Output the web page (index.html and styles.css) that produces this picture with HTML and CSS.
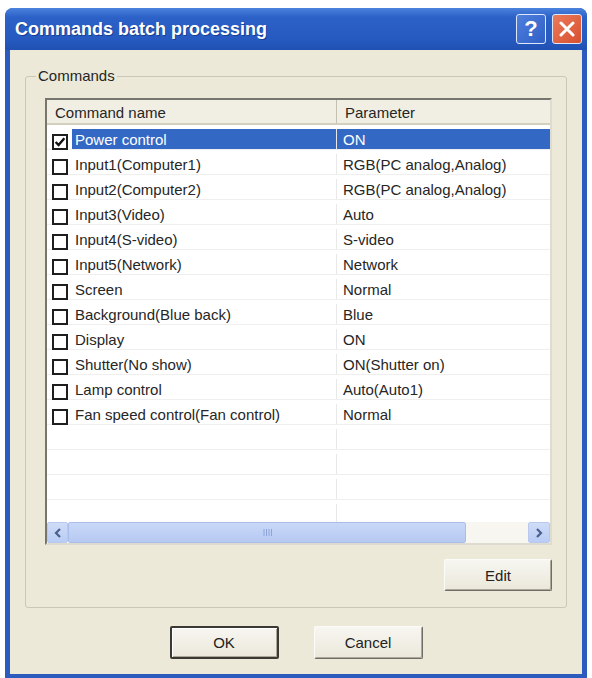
FILE: index.html
```html
<!DOCTYPE html>
<html lang="en">
<head>
    <meta charset="UTF-8">
    <title>Commands batch processing</title>
    <link rel="stylesheet" href="styles.css">
</head>
<body>
    <div class="window">
        <div class="titlebar">
            <span class="title">Commands batch processing</span>
            <span class="tb-btn tb-help">?</span>
            <span class="tb-btn tb-close">
                <svg width="16" height="16" viewBox="0 0 16 16"><path d="M2 2 L14 14 M14 2 L2 14" stroke="#fff" stroke-width="3" stroke-linecap="round"/></svg>
            </span>
        </div>
        <div class="client">
            <div class="group">
                <span class="group-label">Commands</span>
                <div class="list">
                    <div class="list-head">
                        <div class="head-cell head-name">Command name</div>
                        <div class="head-cell">Parameter</div>
                    </div>
                    <div class="rows">
                        <div class="row selected">
                            <div class="cell-name"><span class="check checked"><svg width="12" height="12" viewBox="0 0 11 11"><path d="M1.5 5.5 L4.2 8.3 L9.5 2" fill="none" stroke="#111" stroke-width="2.2"/></svg></span><span class="label">Power control</span></div>
                            <div class="cell-param">ON</div>
                        </div>
                        <div class="row">
                            <div class="cell-name"><span class="check"></span><span class="label">Input1(Computer1)</span></div>
                            <div class="cell-param">RGB(PC analog,Analog)</div>
                        </div>
                        <div class="row">
                            <div class="cell-name"><span class="check"></span><span class="label">Input2(Computer2)</span></div>
                            <div class="cell-param">RGB(PC analog,Analog)</div>
                        </div>
                        <div class="row">
                            <div class="cell-name"><span class="check"></span><span class="label">Input3(Video)</span></div>
                            <div class="cell-param">Auto</div>
                        </div>
                        <div class="row">
                            <div class="cell-name"><span class="check"></span><span class="label">Input4(S-video)</span></div>
                            <div class="cell-param">S-video</div>
                        </div>
                        <div class="row">
                            <div class="cell-name"><span class="check"></span><span class="label">Input5(Network)</span></div>
                            <div class="cell-param">Network</div>
                        </div>
                        <div class="row">
                            <div class="cell-name"><span class="check"></span><span class="label">Screen</span></div>
                            <div class="cell-param">Normal</div>
                        </div>
                        <div class="row">
                            <div class="cell-name"><span class="check"></span><span class="label">Background(Blue back)</span></div>
                            <div class="cell-param">Blue</div>
                        </div>
                        <div class="row">
                            <div class="cell-name"><span class="check"></span><span class="label">Display</span></div>
                            <div class="cell-param">ON</div>
                        </div>
                        <div class="row">
                            <div class="cell-name"><span class="check"></span><span class="label">Shutter(No show)</span></div>
                            <div class="cell-param">ON(Shutter on)</div>
                        </div>
                        <div class="row">
                            <div class="cell-name"><span class="check"></span><span class="label">Lamp control</span></div>
                            <div class="cell-param">Auto(Auto1)</div>
                        </div>
                        <div class="row">
                            <div class="cell-name"><span class="check"></span><span class="label">Fan speed control(Fan control)</span></div>
                            <div class="cell-param">Normal</div>
                        </div>
                        <div class="row empty"><div class="cell-name"></div><div class="cell-param"></div></div>
                        <div class="row empty"><div class="cell-name"></div><div class="cell-param"></div></div>
                        <div class="row empty"><div class="cell-name"></div><div class="cell-param"></div></div>
                        <div class="row empty"><div class="cell-name"></div><div class="cell-param"></div></div>
                    </div>
                    <div class="hscroll">
                        <span class="sb-btn">
                            <svg width="10" height="12" viewBox="0 0 10 12"><path d="M7 2 L3 6 L7 10" fill="none" stroke="#4a5f8c" stroke-width="2.2"/></svg>
                        </span>
                        <span class="sb-thumb">
                            <svg width="9" height="9" viewBox="0 0 9 9"><path d="M1 1 V8 M3.5 1 V8 M6 1 V8 M8.5 1 V8" stroke="#8ea4d8" stroke-width="1"/></svg>
                        </span>
                        <span class="sb-track"></span>
                        <span class="sb-btn sb-right">
                            <svg width="10" height="12" viewBox="0 0 10 12"><path d="M3 2 L7 6 L3 10" fill="none" stroke="#4a5f8c" stroke-width="2.2"/></svg>
                        </span>
                    </div>
                </div>
                <button class="btn btn-edit">Edit</button>
            </div>
            <div class="actions">
                <button class="btn btn-default">OK</button>
                <button class="btn">Cancel</button>
            </div>
        </div>
    </div>
</body>
</html>
```

FILE: styles.css
```css
body {
    margin: 0;
    background: #fff;
    font-family: "Liberation Sans", Arial, sans-serif;
    font-size: 15px;
    color: #262626;
}
.window {
    margin: 8px 0 0 5px;
    width: 582px;
    height: 670px;
    background: #2a5bbd;
    border-radius: 8px 8px 0 0;
    display: flex;
    flex-direction: column;
}
.titlebar {
    height: 42px;
    display: flex;
    align-items: center;
    padding: 0 5px 0 10px;
    background: linear-gradient(#4b83de, #2c61c7 22%, #265ac0 75%, #2050b2);
    border-radius: 8px 8px 0 0;
}
.title {
    flex: 1;
    color: #fff;
    font-weight: bold;
    font-size: 18px;
    text-shadow: 1px 1px 0 #173f94;
}
.tb-btn {
    width: 30px;
    height: 30px;
    box-sizing: border-box;
    border: 1px solid #dfe7fa;
    border-radius: 3px;
    display: flex;
    align-items: center;
    justify-content: center;
    margin-left: 6px;
}
.tb-help {
    background: linear-gradient(135deg, #4f80de, #2f5fc4);
    color: #fff;
    font-weight: bold;
    font-size: 22px;
}
.tb-close {
    background: linear-gradient(135deg, #ea7b5c, #d8502f);
}
.client {
    flex: 1;
    margin: 0 5px 4px;
    background: #ece9d8;
    padding: 26px 15px 0;
    display: flex;
    flex-direction: column;
}
.group {
    position: relative;
    border: 1px solid #c9c7b8;
    border-radius: 3px;
    padding: 21px 14px 16px 19px;
    display: flex;
    flex-direction: column;
}
.group-label {
    position: absolute;
    top: -10px;
    left: 10px;
    padding: 0 2px;
    line-height: 18px;
    background: #ece9d8;
}
.list {
    height: 447px;
    box-sizing: border-box;
    border: 2px solid;
    border-color: #77766e #dedcd0 #dedcd0 #77766e;
    background: #fff;
    display: flex;
    flex-direction: column;
}
.list-head {
    height: 25px;
    box-sizing: border-box;
    display: flex;
    background: #f1efe4;
    border-bottom: 2px solid #d3d0c0;
}
.head-cell {
    padding: 4px 0 0 8px;
}
.head-name {
    width: 290px;
    box-sizing: border-box;
    border-right: 1px solid #c4c1b0;
}
.rows {
    flex: 1;
    overflow: hidden;
}
.row {
    height: 25px;
    box-sizing: border-box;
    display: flex;
    padding-top: 4px;
    border-bottom: 1px solid #efefef;
}
.cell-name {
    width: 290px;
    box-sizing: border-box;
    display: flex;
    border-right: 1px solid #e8e8e8;
}
.check {
    width: 16px;
    height: 16px;
    box-sizing: border-box;
    border: 2px solid #1e1e1e;
    background: #fff;
    margin: 5px 4px 0 5px;
    display: flex;
    align-items: center;
    justify-content: center;
}
.label {
    flex: 1;
    padding: 2px 0 0 3px;
}
.cell-param {
    flex: 1;
    padding: 2px 0 0 6px;
}
.selected .label,
.selected .cell-param {
    background: #3369c4;
    color: #fff;
}
.hscroll {
    height: 21px;
    display: flex;
}
.sb-btn {
    width: 21px;
    box-sizing: border-box;
    border: 1px solid #b9c9ee;
    border-radius: 2px;
    background: linear-gradient(#cfdcf8, #b9ccf4);
    display: flex;
    align-items: center;
    justify-content: center;
}
.sb-right {
    width: 22px;
}
.sb-thumb {
    width: 398px;
    box-sizing: border-box;
    border: 1px solid #a9bde9;
    border-radius: 2px;
    background: linear-gradient(#c9d8f8, #b6c9f2);
    display: flex;
    align-items: center;
    justify-content: center;
}
.sb-track {
    flex: 1;
    background: #f7f6f0;
}
.btn {
    font: inherit;
    color: #222;
    background: linear-gradient(#f7f6f1, #ebe8da);
    border: 1px solid;
    border-color: #fbfbf8 #6f6d66 #6f6d66 #fbfbf8;
    box-shadow: inset -1px -1px 0 #aca899;
    border-radius: 2px;
    padding: 0;
}
.btn-edit {
    align-self: flex-end;
    margin-top: 14px;
    width: 108px;
    height: 32px;
}
.actions {
    display: flex;
    justify-content: center;
    gap: 35px;
    margin-top: 18px;
}
.actions .btn {
    width: 109px;
    height: 33px;
}
.btn-default {
    border: 2px solid #3a3934;
    box-shadow: inset 1px 1px 0 #fff, inset -1px -1px 0 #aca899;
}
```
